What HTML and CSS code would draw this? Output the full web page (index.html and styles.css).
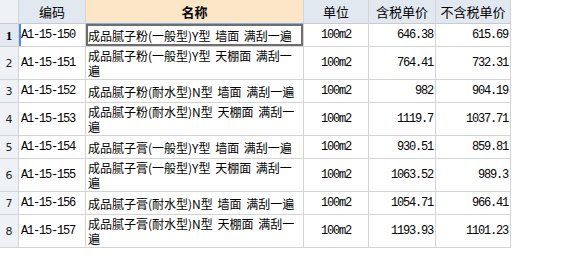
FILE: index.html
```html
<!DOCTYPE html>
<html lang="zh">
<head>
<meta charset="utf-8">
<link rel="stylesheet" href="styles.css">
</head>
<body>
<div class="grid">
  <div class="c hd rn"></div>
  <div class="c hd">编码</div>
  <div class="c hd name-hd">名称</div>
  <div class="c hd">单位</div>
  <div class="c hd">含税单价</div>
  <div class="c hd">不含税单价</div>

  <div class="c rn cur">1</div>
  <div class="c code cur-code">A1-15-150</div>
  <div class="c name sel"><span class="txt">成品腻子粉(一般型)Y型 墙面 满刮一遍</span></div>
  <div class="c unit">100m2</div>
  <div class="c num">646.38</div>
  <div class="c num">615.69</div>

  <div class="c rn">2</div>
  <div class="c code">A1-15-151</div>
  <div class="c name two"><span class="txt">成品腻子粉(一般型)Y型 天棚面 满刮一遍</span></div>
  <div class="c unit">100m2</div>
  <div class="c num">764.41</div>
  <div class="c num">732.31</div>

  <div class="c rn">3</div>
  <div class="c code">A1-15-152</div>
  <div class="c name"><span class="txt">成品腻子粉(耐水型)N型 墙面 满刮一遍</span></div>
  <div class="c unit">100m2</div>
  <div class="c num">982</div>
  <div class="c num">904.19</div>

  <div class="c rn">4</div>
  <div class="c code">A1-15-153</div>
  <div class="c name two"><span class="txt">成品腻子粉(耐水型)N型 天棚面 满刮一遍</span></div>
  <div class="c unit">100m2</div>
  <div class="c num">1119.7</div>
  <div class="c num">1037.71</div>

  <div class="c rn">5</div>
  <div class="c code">A1-15-154</div>
  <div class="c name"><span class="txt">成品腻子膏(一般型)Y型 墙面 满刮一遍</span></div>
  <div class="c unit">100m2</div>
  <div class="c num">930.51</div>
  <div class="c num">859.81</div>

  <div class="c rn">6</div>
  <div class="c code">A1-15-155</div>
  <div class="c name two"><span class="txt">成品腻子膏(一般型)Y型 天棚面 满刮一遍</span></div>
  <div class="c unit">100m2</div>
  <div class="c num">1063.52</div>
  <div class="c num">989.3</div>

  <div class="c rn">7</div>
  <div class="c code">A1-15-156</div>
  <div class="c name"><span class="txt">成品腻子膏(耐水型)N型 墙面 满刮一遍</span></div>
  <div class="c unit">100m2</div>
  <div class="c num">1054.71</div>
  <div class="c num">966.41</div>

  <div class="c rn">8</div>
  <div class="c code">A1-15-157</div>
  <div class="c name two"><span class="txt">成品腻子膏(耐水型)N型 天棚面 满刮一遍</span></div>
  <div class="c unit">100m2</div>
  <div class="c num">1193.93</div>
  <div class="c num">1101.23</div>
</div>
</body>
</html>
```

FILE: styles.css
```css
html, body {
  margin: 0;
  padding: 0;
  background: #ffffff;
}
body {
  font-family: "Noto Sans CJK SC", sans-serif;
  font-size: 12px;
  color: #000;
}
.grid {
  display: grid;
  grid-template-columns: 19px 67px 218px 65px 67px 75px;
  grid-template-rows: 24px 23px 33px 23px 33px 23px 33px 23px 33px;
  width: 511px;
}
.c {
  box-sizing: border-box;
  border-right: 1px solid #d4d4d4;
  border-bottom: 1px solid #d4d4d4;
  display: flex;
  align-items: center;
  overflow: hidden;
  white-space: nowrap;
  line-height: 15px;
}
.hd {
  background: #e2e8f0;
  justify-content: center;
  font-size: 13px;
  border-bottom-color: #c8ccd2;
}
.name-hd {
  background: #fde5c7;
  font-weight: bold;
  border-bottom: 1px solid #7fb0e8;
}
.rn {
  background: #eef1f5;
  justify-content: center;
  font-family: "DejaVu Sans", sans-serif;
  font-size: 11px;
  color: #222;
}
.rn.cur {
  background: #e4e9f1;
  font-family: "Liberation Serif", serif;
  font-weight: bold;
  font-size: 13px;
  color: #000;
}
.cur-code {
  box-shadow: inset 2px 0 0 #4a8fe0;
}
.code {
  padding-left: 2px;
  font-family: "Liberation Mono", monospace;
  letter-spacing: -1.2px;
}
.unit {
  justify-content: center;
  font-family: "Liberation Mono", monospace;
  letter-spacing: -1.2px;
}
.num {
  justify-content: flex-end;
  padding-right: 2px;
  font-family: "Liberation Mono", monospace;
  letter-spacing: -1.2px;
}
.name {
  padding-left: 2px;
  font-size: 12px;
}
.name .txt {
  display: block;
  width: 211px;
  white-space: normal;
  word-spacing: 2px;
  line-break: anywhere;
  word-break: break-all;
}
.name.two {
  align-items: flex-start;
  padding-top: 1px;
}
.sel {
  box-shadow: inset 0 0 0 2px #6e6e6e;
}
```
